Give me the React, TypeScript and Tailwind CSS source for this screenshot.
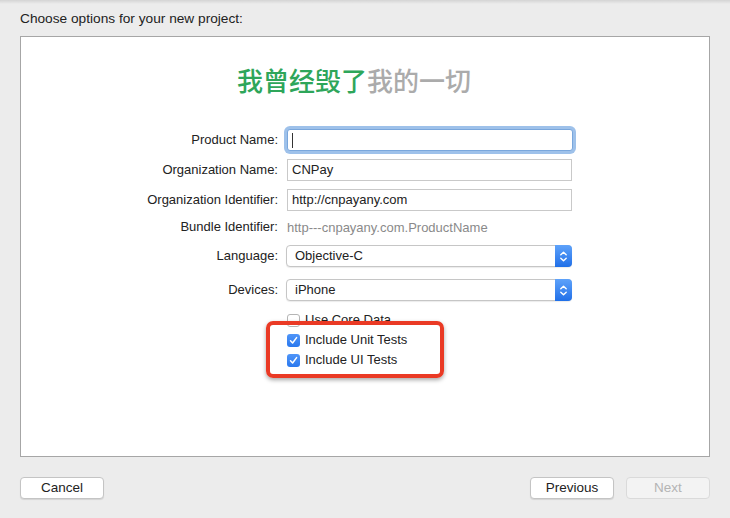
import React from "react";

const font = { fontFamily: '"Liberation Sans", Arial, sans-serif' };

function Field({ value, focused }: { value?: string; focused?: boolean }) {
  if (focused) {
    return (
      <div className="w-[286px] h-[22px] rounded-[3px] ring-[3px] ring-[#9ec1ea] border border-[#7aa7dc] bg-white flex items-center pl-[4px]">
        <div className="w-px h-[15px] bg-[#333]" />
      </div>
    );
  }
  return (
    <div className="w-[285px] h-[22px] border border-[#c9c9c9] bg-white flex items-center pl-[4px] text-[13px] text-[#222]">
      {value}
    </div>
  );
}

function Popup({ value }: { value: string }) {
  return (
    <div className="w-[286px] h-[22px] ml-[-1px] rounded-[4px] border border-[#c6c6c6] bg-white flex items-center shadow-[0_1px_1px_rgba(0,0,0,0.08)]">
      <div className="flex-1 pl-[8px] text-[13px] text-[#222]">{value}</div>
      <div className="w-[17px] h-[22px] mr-[-1px] rounded-r-[4px] bg-gradient-to-b from-[#5ea2fa] to-[#1f6fe8] flex items-center justify-center">
        <svg width="9" height="13" viewBox="0 0 9 13" fill="none" stroke="white" strokeWidth="1.4" strokeLinecap="round" strokeLinejoin="round">
          <path d="M1.8 4.8 L4.5 2.2 L7.2 4.8" />
          <path d="M1.8 8.2 L4.5 10.8 L7.2 8.2" />
        </svg>
      </div>
    </div>
  );
}

function Row({ label, children, className }: { label: string; children: React.ReactNode; className?: string }) {
  return (
    <div className={"flex items-center " + (className || "")}>
      <div className="w-[257px] text-right text-[13px] text-[#222]">{label}</div>
      <div className="ml-[9px]">{children}</div>
    </div>
  );
}

function Check({ label, checked }: { label: string; checked?: boolean }) {
  return (
    <div className="flex items-center h-[20px] ml-[266px]">
      {checked ? (
        <div className="w-[13px] h-[13px] rounded-[3px] bg-gradient-to-b from-[#4f95f8] to-[#2a78ee] flex items-center justify-center">
          <svg width="9" height="9" viewBox="0 0 9 9" fill="none" stroke="white" strokeWidth="1.5" strokeLinecap="round" strokeLinejoin="round">
            <path d="M1.5 4.8 L3.6 7 L7.6 1.6" />
          </svg>
        </div>
      ) : (
        <div className="w-[13px] h-[13px] rounded-[3px] bg-white border border-[#b5b5b5]" />
      )}
      <span className="ml-[5px] text-[13px] text-[#222]">{label}</span>
    </div>
  );
}

function Button({ label, disabled }: { label: string; disabled?: boolean }) {
  return (
    <div
      className={
        "w-[84px] h-[22px] rounded-[4px] border flex items-center justify-center text-[13.5px] " +
        (disabled
          ? "border-[#dadada] bg-[#f3f3f3] text-[#b4b4b4]"
          : "border-[#c4c4c4] bg-white text-[#222] shadow-[0_1px_1px_rgba(0,0,0,0.1)]")
      }
    >
      {label}
    </div>
  );
}

export default function App() {
  return (
    <div style={font} className="w-[730px] h-[518px] bg-[#ececec] relative overflow-hidden">
      <div className="h-[4px] bg-gradient-to-b from-[#d4d4d4] to-[#ececec]" />
      <div className="pt-[6px] pl-[20px] text-[13.7px] leading-[18px] text-[#222]">
        Choose options for your new project:
      </div>
      <div className="ml-[20px] mt-[8px] w-[690px] h-[421px] bg-white border border-[#a6a6a6] relative">
        <div
          className="pt-[27px] pr-[22px] text-center text-[26px] leading-[32px] font-medium"
          style={{ fontFamily: '"Noto Sans CJK SC", sans-serif' }}
        >
          <span className="text-[#2ea65a]">我曾经毁了</span>
          <span className="text-[#ababab]">我的一切</span>
        </div>
        <Row label="Product Name:" className="mt-[33px]">
          <Field focused />
        </Row>
        <Row label="Organization Name:" className="mt-[8px]">
          <Field value="CNPay" />
        </Row>
        <Row label="Organization Identifier:" className="mt-[8px]">
          <Field value="http://cnpayany.com" />
        </Row>
        <Row label="Bundle Identifier:" className="mt-[8px] h-[16px]">
          <span className="text-[13px] text-[#8a8a8a]">http---cnpayany.com.ProductName</span>
        </Row>
        <Row label="Language:" className="mt-[10px]">
          <Popup value="Objective-C" />
        </Row>
        <Row label="Devices:" className="mt-[12px]">
          <Popup value="iPhone" />
        </Row>
        <div className="mt-[9px]">
          <Check label="Use Core Data" />
          <Check label="Include Unit Tests" checked />
          <Check label="Include UI Tests" checked />
        </div>
        <div className="absolute left-[245px] top-[284px] w-[178px] h-[57px] border-[4px] border-[#ea3a25] rounded-[7px] shadow-[0_2px_4px_rgba(0,0,0,0.35)]" />
      </div>
      <div className="flex items-center mt-[20px] px-[20px]">
        <Button label="Cancel" />
        <div className="flex-1" />
        <Button label="Previous" />
        <div className="w-[12px]" />
        <Button label="Next" disabled />
      </div>
    </div>
  );
}
